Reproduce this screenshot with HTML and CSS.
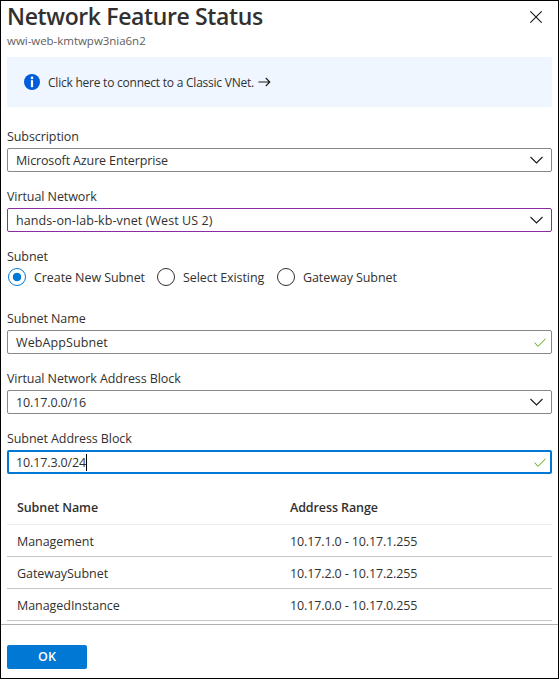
FILE: index.html
```html
<!DOCTYPE html>
<html lang="en">
<head>
<meta charset="utf-8">
<title>Network Feature Status</title>
<link rel="stylesheet" href="styles.css">
</head>
<body>
<main class="blade">
  <header class="header">
    <div>
      <h1 class="title">Network Feature Status</h1>
      <p class="subtitle">wwi-web-kmtwpw3nia6n2</p>
    </div>
    <svg class="close" viewBox="0 0 12 12"><path d="M.3.3l11.4 11.4M11.7.3L.3 11.7"/></svg>
  </header>
  <section class="content">
    <a class="banner">
      <svg class="info" viewBox="0 0 16 16"><circle cx="8" cy="8" r="8" fill="#015cda"/><circle cx="8" cy="3.9" r="1.3" fill="#fff"/><path d="M6.9 6.2h2.2v7H6.9z" fill="#fff"/></svg>
      <span class="banner-text">Click here to connect to a Classic VNet.</span>
      <svg class="arrow" viewBox="0 0 13 10"><path d="M.5 5h11.3M7.8 1l4 4-4 4"/></svg>
    </a>
    <div class="group">
      <div class="label">Subscription</div>
      <div class="field"><span class="value tight">Microsoft Azure Enterprise</span><svg class="chevron" viewBox="0 0 13 8"><path d="M.5 1l6 6 6-6"/></svg></div>
    </div>
    <div class="group">
      <div class="label">Virtual Network</div>
      <div class="field edited"><span class="value loose">hands-on-lab-kb-vnet (West US 2)</span><svg class="chevron" viewBox="0 0 13 8"><path d="M.5 1l6 6 6-6"/></svg></div>
    </div>
    <div class="group radio-group">
      <div class="label">Subnet</div>
      <div class="radios">
        <div class="option"><span class="radio checked"></span><span class="option-text">Create New Subnet</span></div>
        <div class="option"><span class="radio"></span><span class="option-text">Select Existing</span></div>
        <div class="option"><span class="radio"></span><span class="option-text">Gateway Subnet</span></div>
      </div>
    </div>
    <div class="group">
      <div class="label">Subnet Name</div>
      <div class="field"><span class="value loose">WebAppSubnet</span><svg class="check" viewBox="0 0 12 9"><path d="M.4 4.6l3.7 3.7L11.7.6"/></svg></div>
    </div>
    <div class="group">
      <div class="label">Virtual Network Address Block</div>
      <div class="field"><span class="value tight">10.17.0.0/16</span><svg class="chevron" viewBox="0 0 13 8"><path d="M.5 1l6 6 6-6"/></svg></div>
    </div>
    <div class="group">
      <div class="label">Subnet Address Block</div>
      <div class="field focused"><span class="value tight">10.17.3.0/24</span><i class="caret"></i><svg class="check" viewBox="0 0 12 9"><path d="M.4 4.6l3.7 3.7L11.7.6"/></svg></div>
    </div>
    <div class="table">
      <div class="row head"><span>Subnet Name</span><span>Address Range</span></div>
      <div class="row"><span class="name">Management</span><span>10.17.1.0 - 10.17.1.255</span></div>
      <div class="row"><span class="name">GatewaySubnet</span><span>10.17.2.0 - 10.17.2.255</span></div>
      <div class="row"><span class="name">ManagedInstance</span><span>10.17.0.0 - 10.17.0.255</span></div>
    </div>
  </section>
  <footer class="footer"><button class="ok">OK</button></footer>
</main>
</body>
</html>
```
FILE: styles.css
```css
* { box-sizing: border-box; }
body { margin: 0; background: #fff; color: #323130; font: 12.5px/16px "Open Sans", "Noto Sans", sans-serif; letter-spacing: -.08px; }
.blade { width: 559px; height: 679px; border: 1px solid #000; display: flex; flex-direction: column; overflow: hidden; }
.header { flex: none; display: flex; justify-content: space-between; height: 56px; padding: 0 16px 0 6px; }
.title { margin: 0 0 2px; font-size: 23px; line-height: 30px; font-weight: 600; white-space: nowrap; letter-spacing: -.37px; }
.subtitle { margin: 0; font-size: 11.5px; line-height: 16px; color: #605e5c; letter-spacing: -.03px; }
.close { width: 12px; height: 12px; margin-top: 10px; }
svg { flex: none; fill: none; stroke: #1b1a19; stroke-width: 1.1; }
.content { flex: none; height: 567px; padding: 0 6px; }
.banner { display: flex; align-items: center; height: 50px; padding-left: 17px; background: #eff6ff; border-radius: 2px; margin-bottom: 21px; }
.info { width: 16px; height: 16px; stroke: none; margin-right: 8px; }
.banner-text { font-size: 12px; padding-top: 2px; white-space: nowrap; letter-spacing: -.23px; }
.arrow { width: 13px; height: 10px; margin-left: 4px; }
.group { height: 60px; }
.label { height: 20px; padding-top: 1px; white-space: nowrap; }
.field { display: flex; align-items: center; height: 24px; border: 1px solid #8a8886; border-radius: 2px; padding: 0 8px; white-space: nowrap; }
.edited { border-color: #8a2da5; }
.focused { border: 2px solid #0078d4; padding: 0 7px; }
.value { padding-top: 1px; }
.tight { letter-spacing: -.13px; }
.loose { letter-spacing: .09px; }
.chevron { width: 13px; height: 8px; margin-left: auto; }
.check { width: 12px; height: 9px; margin-left: auto; margin-right: -3px; stroke: #57a300; stroke-width: 1; }
.caret { width: 1px; height: 17px; background: #000; }
.radio-group { height: 62px; }
.radios { display: grid; grid-template-columns: 149px 120px auto; padding-left: 1px; }
.option { display: flex; align-items: center; gap: 8px; height: 18px; white-space: nowrap; }
.option-text { padding-top: 2px; }
.radio { width: 18px; height: 18px; border: 1px solid #323130; border-radius: 50%; flex: none; }
.checked { border-color: #0078d4; background: radial-gradient(circle, #0078d4 3.9px, transparent 4.6px); }
.row { display: grid; grid-template-columns: 273px 1fr; align-items: center; height: 32px; padding: 3px 10px 0; border-bottom: 1px solid #c8c6c4; letter-spacing: -.13px; }
.name { letter-spacing: -.05px; }
.head { height: 35px; padding-top: 1px; font-weight: 600; border-color: #edebe9; letter-spacing: -.1px; }
.footer { flex: 1; border-top: 1px solid #b3b0ad; padding: 20px 6px; }
.ok { display: block; width: 80px; height: 24px; border: 0; border-radius: 2px; background: #0078d4; color: #fff; font: 600 12.5px/24px "Open Sans", sans-serif; padding: 0; }
```
